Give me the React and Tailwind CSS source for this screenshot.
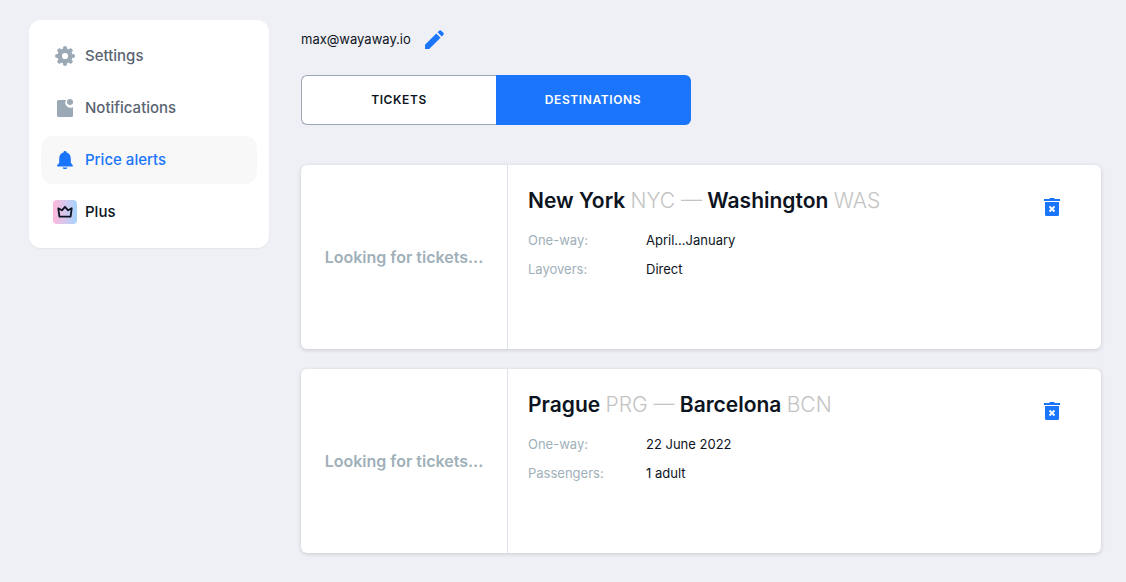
import { useState } from 'react';

function GearIcon() {
  return (
    <svg viewBox="0 0 24 24" className="size-6" fill="none" stroke="currentColor" aria-hidden="true">
      <circle cx="12" cy="12" r="5.3" strokeWidth="4.4" />
      <g strokeWidth="4.2" strokeLinecap="round">
        <path d="M12 4.1v.8M12 19.1v.8M4.1 12h.8M19.1 12h.8" />
        <path d="M6.4 6.4l.6.6M17 17l.6.6M6.4 17.6l.6-.6M17 7l.6-.6" />
      </g>
    </svg>
  );
}

function NoteIcon() {
  return (
    <svg viewBox="0 0 24 24" className="size-6" fill="currentColor" aria-hidden="true">
      <path d="M5.6 4h7.500a5 5 0 0 0 6.900 6.900v8.500a1.6 1.6 0 0 1-1.6 1.6H5.6A1.6 1.6 0 0 1 4 19.400V5.600A1.6 1.6 0 0 1 5.600 4z" />
      <circle cx="17" cy="6" r="3" />
    </svg>
  );
}

function BellIcon() {
  return (
    <svg viewBox="0 0 24 24" className="size-6" fill="currentColor" aria-hidden="true">
      <path d="M12 3c1 0 1.600.7 1.600 1.600 2.700.8 4.200 3 4.200 5.900v4.300l1.800 2.200c.6.8.3 1.500-.6 1.500H5c-.9 0-1.200-.7-.6-1.500l1.800-2.200v-4.300c0-2.900 1.500-5.100 4.200-5.900C10.400 3.700 11 3 12 3z" />
      <path d="M9.500 19.500h5c-.4 1-1.300 1.500-2.500 1.500s-2.100-.5-2.500-1.500z" />
    </svg>
  );
}

function CrownIcon() {
  return (
    <span className="flex size-6 items-center justify-center rounded bg-linear-to-r from-[#ffb8d9] to-[#a3d3ff]">
      <svg viewBox="0 0 24 24" className="size-6" fill="none" stroke="currentColor" strokeWidth="1.8" aria-hidden="true">
        <path d="M5.300 8.300l3.600 2 3.100-3.500 3.100 3.500 3.600-2-1.100 8.300H6.400z" strokeLinejoin="round" />
      </svg>
    </span>
  );
}

function PencilIcon() {
  return (
    <svg viewBox="0 0 24 24" className="size-6" fill="currentColor" aria-hidden="true">
      <path d="M3 21v-4.200L14.300 5.500l4.200 4.200L7.200 21z" />
      <path d="M15.600 4.200l1.500-1.500c.7-.7 1.500-.7 2.200 0l2 2c.7.7.7 1.500 0 2.200l-1.500 1.500z" />
    </svg>
  );
}

function TrashIcon() {
  return (
    <svg viewBox="0 0 24 24" className="size-6" fill="currentColor" aria-hidden="true">
      <path d="M4 4h5l1-1h4l1 1h5v2H4z" />
      <path d="M5 7h14v12.500a1.500 1.500 0 0 1-1.500 1.500h-11A1.500 1.500 0 0 1 5 19.500z" />
      <path d="M9.500 11.500l5 5M14.500 11.500l-5 5" stroke="#fff" strokeWidth="1.800" />
    </svg>
  );
}

const menu = [
  { label: 'Settings', Icon: GearIcon, icon: 'text-[#9ba8b5]', text: 'text-[#5a6472]' },
  { label: 'Notifications', Icon: NoteIcon, icon: 'text-[#9ba8b5]', text: 'text-[#5a6472]' },
  { label: 'Price alerts', Icon: BellIcon, icon: 'text-[#1a75fa]', text: 'text-[#1a75fa]', active: true },
  { label: 'Plus', Icon: CrownIcon, icon: 'text-[#0d1421]', text: 'text-[#0d1421]' },
];

const alerts = [
  {
    from: 'New York',
    fromCode: 'NYC',
    to: 'Washington',
    toCode: 'WAS',
    details: [['One-way:', 'April...January'], ['Layovers:', 'Direct']],
  },
  {
    from: 'Prague',
    fromCode: 'PRG',
    to: 'Barcelona',
    toCode: 'BCN',
    details: [['One-way:', '22 June 2022'], ['Passengers:', '1 adult']],
  },
];

function Sidebar() {
  return (
    <nav className="flex w-60 shrink-0 flex-col gap-1 rounded-xl bg-white p-3 shadow-xs">
      {menu.map(({ label, Icon, icon, text, active }) => (
        <a
          key={label}
          href="#"
          aria-current={active ? 'page' : undefined}
          className={`flex h-12 items-center gap-2 rounded-xl px-3 text-[15px] font-medium ${text} ${active ? 'bg-[#f8f8f8]' : ''}`}
        >
          <span className={icon}><Icon /></span>
          {label}
        </a>
      ))}
    </nav>
  );
}

function Tabs() {
  const [tab, setTab] = useState('Destinations');

  return (
    <div className="flex h-[50px] max-w-[390px]">
      {['Tickets', 'Destinations'].map((name) => (
        <button
          key={name}
          type="button"
          aria-pressed={tab === name}
          onClick={() => setTab(name)}
          className={`flex-1 border text-xs font-semibold tracking-wider uppercase first:rounded-l-md first:border-r-0 last:rounded-r-md last:border-l-0 ${
            tab === name ? 'border-[#1a75fa] bg-[#1a75fa] text-white' : 'border-[#9ba8b5] bg-white text-[#0d1421]'
          }`}
        >
          {name}
        </button>
      ))}
    </div>
  );
}

function AlertCard({ alert }) {
  return (
    <article className="flex min-h-46 rounded-md bg-white shadow-[0_1px_4px_rgba(0,0,0,0.16)]">
      <div className="flex w-[207px] shrink-0 items-center justify-center border-r border-[#dce3ea] text-base font-semibold text-[#a0b0b9]">
        Looking for tickets...
      </div>
      <div className="flex-1 px-5 py-5">
        <h2 className="text-[21px] leading-8 font-semibold text-[#0d1421]">
          {alert.from} <span className="font-light text-[#c4c4c4]">{alert.fromCode} —</span>{' '}
          {alert.to} <span className="font-light text-[#c4c4c4]">{alert.toCode}</span>
        </h2>
        <dl className="mt-[13px] flex flex-col gap-2 text-[13px] leading-[21px]">
          {alert.details.map(([term, value]) => (
            <div key={term} className="flex">
              <dt className="w-[118px] text-[#a0b0b9]">{term}</dt>
              <dd className="text-[#0d1421]">{value}</dd>
            </div>
          ))}
        </dl>
      </div>
      <div className="pt-[30px] pr-[37px]">
        <button type="button" aria-label="Delete alert" className="block text-[#1a75fa]">
          <TrashIcon />
        </button>
      </div>
    </article>
  );
}

export default function App() {
  return (
    <div className="flex min-h-screen items-start gap-8 bg-[#eff0f5] py-5 pr-[25px] pl-[29px] font-['Inter',sans-serif]">
      <Sidebar />
      <main className="min-w-0 flex-1">
        <div className="mb-[15px] flex h-10 items-center gap-[11px] text-[13px] text-[#0d1421]">
          max@wayaway.io
          <button type="button" aria-label="Edit email" className="text-[#1a75fa]">
            <PencilIcon />
          </button>
        </div>
        <Tabs />
        <div className="mt-10 flex flex-col gap-5">
          {alerts.map((alert) => (
            <AlertCard key={alert.from} alert={alert} />
          ))}
        </div>
      </main>
    </div>
  );
}
